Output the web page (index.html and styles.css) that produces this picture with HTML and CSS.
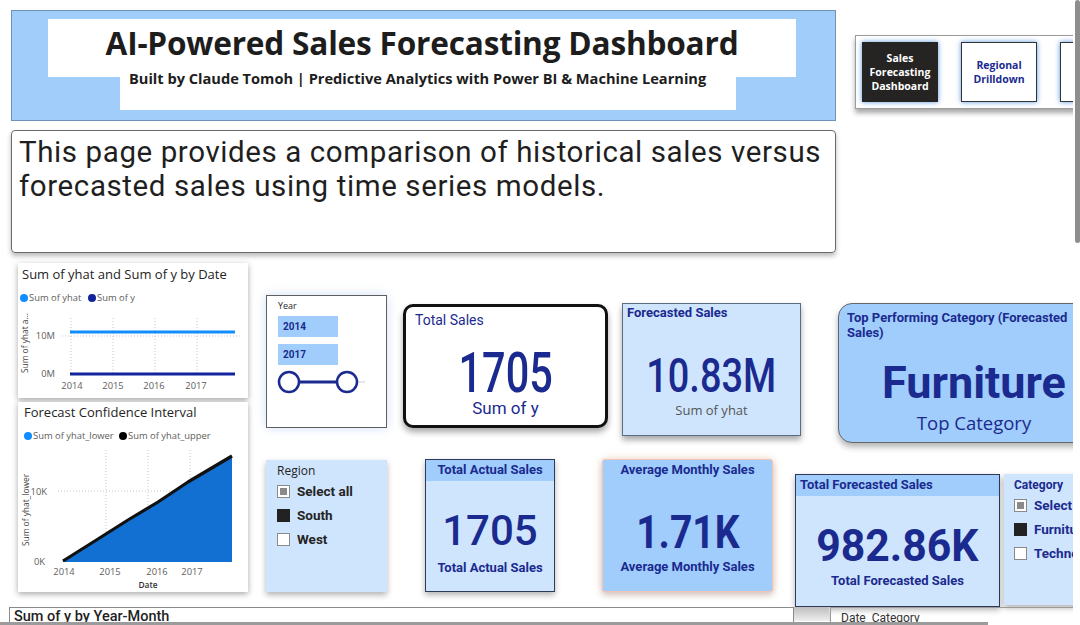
FILE: index.html
```html
<!DOCTYPE html>
<html lang="en">
<head>
<meta charset="utf-8">
<title>AI-Powered Sales Forecasting Dashboard</title>
<link rel="stylesheet" href="styles.css">
</head>
<body>
<div class="page">
  <div class="top">
    <div class="top-left">
      <header class="banner">
        <div class="title-box"><h1>AI-Powered Sales Forecasting Dashboard</h1></div>
        <div class="sub-box"><p>Built by Claude Tomoh | Predictive Analytics with Power BI &amp; Machine Learning</p></div>
      </header>
      <div class="desc">This page provides a comparison of historical sales versus forecasted sales using time series models.</div>
    </div>
    <nav class="nav">
      <div class="nav-btn active">Sales<br>Forecasting<br>Dashboard</div>
      <div class="nav-btn">Regional<br>Drilldown</div>
      <div class="nav-btn"></div>
    </nav>
  </div>

  <div class="middle">
    <div class="charts">
      <div class="chart chart1">
        <svg width="230" height="135" viewBox="0 0 230 135">
          <text x="4" y="16" class="c-title">Sum of yhat and Sum of y by Date</text>
          <circle cx="6" cy="35" r="4" fill="#118DFF"/>
          <text x="11" y="38" class="c-leg">Sum of yhat</text>
          <circle cx="74" cy="35" r="4" fill="#12239E"/>
          <text x="79" y="38" class="c-leg">Sum of y</text>
          <text transform="translate(10 80) rotate(-90)" text-anchor="middle" class="c-axt">Sum of yhat a...</text>
          <line x1="44" y1="73" x2="222" y2="73" class="grid"/>
          <line x1="53" y1="55" x2="53" y2="110" class="grid"/>
          <line x1="95" y1="55" x2="95" y2="110" class="grid"/>
          <line x1="137" y1="55" x2="137" y2="110" class="grid"/>
          <line x1="179" y1="55" x2="179" y2="110" class="grid"/>
          <text x="37" y="76" text-anchor="end" class="c-tick">10M</text>
          <text x="37" y="114" text-anchor="end" class="c-tick">0M</text>
          <line x1="52" y1="69" x2="217" y2="69" stroke="#118DFF" stroke-width="3"/>
          <line x1="52" y1="111" x2="217" y2="111" stroke="#12239E" stroke-width="3"/>
          <text x="54" y="126" text-anchor="middle" class="c-tick">2014</text>
          <text x="95" y="126" text-anchor="middle" class="c-tick">2015</text>
          <text x="136" y="126" text-anchor="middle" class="c-tick">2016</text>
          <text x="178" y="126" text-anchor="middle" class="c-tick">2017</text>
        </svg>
      </div>
      <div class="chart chart2">
        <svg width="230" height="190" viewBox="0 0 230 190">
          <text x="6" y="15" class="c-title">Forecast Confidence Interval</text>
          <circle cx="10" cy="34" r="4" fill="#118DFF"/>
          <text x="15" y="37" class="c-leg">Sum of yhat_lower</text>
          <circle cx="105" cy="34" r="4" fill="#000"/>
          <text x="110" y="37" class="c-leg">Sum of yhat_upper</text>
          <text transform="translate(11 108) rotate(-90)" text-anchor="middle" class="c-axt">Sum of yhat_lower</text>
          <line x1="40" y1="89" x2="214" y2="89" class="grid"/>
          <line x1="88" y1="48" x2="88" y2="158" class="grid"/>
          <line x1="130" y1="48" x2="130" y2="158" class="grid"/>
          <line x1="172" y1="48" x2="172" y2="158" class="grid"/>
          <text x="29" y="93" text-anchor="end" class="c-tick">10K</text>
          <text x="27" y="163" text-anchor="end" class="c-tick">0K</text>
          <polygon points="45,159 214,54 214,160 45,160" fill="#1170D2"/>
          <polyline points="45,159 80,137 110,118 140,100 170,80 214,54" fill="none" stroke="#111" stroke-width="3.2" stroke-linejoin="round"/>
          <text x="46" y="173" text-anchor="middle" class="c-tick">2014</text>
          <text x="92" y="173" text-anchor="middle" class="c-tick">2015</text>
          <text x="139" y="173" text-anchor="middle" class="c-tick">2016</text>
          <text x="174" y="173" text-anchor="middle" class="c-tick">2017</text>
          <text x="130" y="186" text-anchor="middle" class="c-date">Date</text>
        </svg>
      </div>
    </div>

    <div class="tiles">
      <div class="row row1">
        <div class="year-slicer">
          <div class="sl-label">Year</div>
          <div class="year-box">2014</div>
          <div class="year-box">2017</div>
          <svg class="range" width="90" height="26" viewBox="0 0 90 26">
            <line x1="70" y1="13" x2="88" y2="13" stroke="#e6e6e6" stroke-width="2"/>
            <line x1="22" y1="13" x2="62" y2="13" stroke="#1b2a8f" stroke-width="3"/>
            <circle cx="12" cy="13" r="10" fill="#fff" stroke="#1b2a8f" stroke-width="2.5"/>
            <circle cx="70" cy="13" r="10" fill="#fff" stroke="#1b2a8f" stroke-width="2.5"/>
          </svg>
        </div>
        <div class="card total-sales">
          <div class="ts-label">Total Sales</div>
          <div class="ts-value"><span>1705</span></div>
          <div class="ts-sub">Sum of y</div>
        </div>
        <div class="card forecasted">
          <div class="fc-label">Forecasted Sales</div>
          <div class="fc-value"><span>10.83M</span></div>
          <div class="fc-sub">Sum of yhat</div>
        </div>
        <div class="card top-cat">
          <div class="tc-label">Top Performing Category (Forecasted Sales)</div>
          <div class="tc-value">Furniture</div>
          <div class="tc-sub">Top Category</div>
        </div>
      </div>

      <div class="row row2">
        <div class="region-slicer">
          <div class="rs-label">Region</div>
          <div class="opt"><span class="chk partial"></span>Select all</div>
          <div class="opt"><span class="chk on"></span>South</div>
          <div class="opt"><span class="chk"></span>West</div>
        </div>
        <div class="card actual">
          <div class="band">Total Actual Sales</div>
          <div class="big">1705</div>
          <div class="foot">Total Actual Sales</div>
        </div>
        <div class="card avg">
          <div class="band">Average Monthly Sales</div>
          <div class="big bold"><span>1.71K</span></div>
          <div class="foot">Average Monthly Sales</div>
        </div>
        <div class="card tfs">
          <div class="band left">Total Forecasted Sales</div>
          <div class="big bold"><span>982.86K</span></div>
          <div class="foot">Total Forecasted Sales</div>
        </div>
        <div class="cat-slicer">
          <div class="cs-label">Category</div>
          <div class="opt"><span class="chk partial"></span>Select all</div>
          <div class="opt"><span class="chk on"></span>Furniture</div>
          <div class="opt"><span class="chk"></span>Technology</div>
        </div>
      </div>
    </div>
  </div>

  <div class="bottom">
    <div class="ym-box">Sum of y by Year-Month</div>
    <div class="mini-scroll"></div>
    <div class="table-box">Date&nbsp;&nbsp;Category</div>
  </div>
  <div class="bottom-rule"></div>
</div>
<div class="scrollbar"></div>
</body>
</html>
```

FILE: styles.css
```css
* { box-sizing: border-box; margin: 0; padding: 0; }
html, body { width: 1080px; height: 625px; overflow: hidden; background: #fff; }
body { position: relative; font-family: "Open Sans", "Noto Sans", sans-serif; color: #252423; }
.page { width: 1073px; height: 625px; overflow: hidden; position: relative; }

/* top */
.top { display: flex; align-items: flex-start; height: 253px; }
.top-left { margin-left: 11px; width: 825px; flex: none; }
.banner { margin-top: 10px; height: 111px; background: #a0cdfa; border: 1px solid #6f93b8; padding-top: 8px; }
.title-box { margin-left: 36px; width: 748px; height: 58px; background: #fff; text-align: center; padding-top: 5px; }
.title-box h1 { font-size: 31.6px; font-weight: 700; line-height: 38px; color: #1d1d1d; letter-spacing: -0.2px; white-space: nowrap; }
.sub-box { margin-left: 108px; width: 616px; height: 33px; background: #fff; }
.sub-box p { position: relative; top: -9px; margin-left: 9px; font-size: 14.6px; font-weight: 700; line-height: 20px; color: #1d1d1d; white-space: nowrap; }
.desc { margin-top: 9px; height: 123px; border: 1px solid #6b6b6b; border-radius: 4px; box-shadow: 0 3px 5px rgba(0,0,0,0.28); padding: 4px 0 0 7px; font-family: "Roboto", sans-serif; font-size: 29.5px; letter-spacing: 0.6px; line-height: 34px; color: #1f1f1f; }

.nav { margin-left: 19px; margin-top: 35px; width: 240px; height: 74px; flex: none; border: 1px solid #9c9c9c; background: #fff; box-shadow: 0 4px 5px rgba(0,0,0,0.35); display: flex; gap: 23px; padding: 6px 0 0 6px; }
.nav-btn { width: 76px; height: 60px; flex: none; background: #fff; border: 1px solid #333; box-shadow: 0 0 5px rgba(40,120,220,0.8); display: flex; align-items: center; justify-content: center; text-align: center; font-size: 10.5px; font-weight: 700; line-height: 14px; color: #1b2a8f; }
.nav-btn.active { background: #252423; color: #fff; border-color: #252423; }

/* middle */
.middle { display: flex; align-items: flex-start; margin-top: 10px; height: 344px; }
.charts { margin-left: 18px; width: 230px; flex: none; display: flex; flex-direction: column; gap: 4px; }
.chart { background: #fff; box-shadow: 0 2px 6px rgba(0,0,0,0.35); }
.chart svg { display: block; }
.chart1 { height: 135px; }
.chart2 { height: 190px; }
.c-title { font-family: "Open Sans", sans-serif; font-size: 13px; fill: #252423; }
.c-leg { font-family: "Open Sans", sans-serif; font-size: 9.4px; fill: #605e5c; }
.c-axt { font-family: "Open Sans", sans-serif; font-size: 8.4px; fill: #444; }
.c-tick { font-family: "Open Sans", sans-serif; font-size: 9.4px; fill: #605e5c; }
.c-date { font-family: "Open Sans", sans-serif; font-size: 8.4px; font-weight: 600; fill: #333; }
.grid { stroke: #c8c8c8; stroke-width: 1; stroke-dasharray: 1 2; }

.tiles { margin-left: 18px; flex: none; width: 900px; padding-top: 32px; }
.row { display: flex; align-items: flex-start; }
.row1 { height: 164px; }

.year-slicer { width: 121px; height: 133px; flex: none; background: #fff; border: 1px solid #5f5f5f; box-shadow: 0 0 10px rgba(150,190,240,0.45); padding: 4px 0 0 11px; }
.sl-label { font-size: 9px; line-height: 12px; color: #252423; }
.year-box { margin-top: 4px; width: 60px; height: 21px; background: #a0cdfb; color: #1b2a8f; font-family: "Roboto", sans-serif; font-weight: 700; font-size: 10px; line-height: 21px; padding-left: 5px; }
.year-box + .year-box { margin-top: 7px; }
.range { display: block; margin-top: 4px; margin-left: -1px; }

.card { flex: none; }
.total-sales { margin-left: 16px; margin-top: 9px; width: 205px; height: 124px; background: #fff; border: 3px solid #111; border-radius: 10px; box-shadow: 0 4px 6px rgba(0,0,0,0.35); padding: 4px 0 0 9px; font-family: "Roboto", sans-serif; color: #1b2a8f; }
.ts-label { font-size: 14px; line-height: 18px; }
.ts-value { text-align: center; margin-left: -9px; font-size: 56px; font-weight: 500; line-height: 44px; margin-top: 22px; }
.ts-value span { display: inline-block; transform: scaleX(0.74); }
.ts-sub { text-align: center; margin-left: -9px; font-size: 17px; line-height: 20px; margin-top: 3px; }

.forecasted { margin-left: 14px; margin-top: 8px; width: 179px; height: 133px; background: #cfe5fd; border: 1px solid #5d6d80; box-shadow: 0 4px 6px rgba(0,0,0,0.35); padding: 1px 0 0 4px; font-family: "Roboto", sans-serif; color: #1b2a8f; }
.fc-label { font-size: 13px; font-weight: 700; line-height: 16px; }
.fc-value { text-align: center; margin-left: -4px; font-size: 48px; font-weight: 500; line-height: 50px; margin-top: 30px; }
.fc-value span { display: inline-block; transform: scaleX(0.79); }
.fc-sub { text-align: center; margin-left: -4px; font-family: "Open Sans", sans-serif; font-size: 13px; line-height: 18px; color: #555; margin-top: 0; }

.top-cat { margin-left: 37px; margin-top: 8px; width: 272px; height: 140px; background: #a0cdfb; border: 1px solid #666; border-radius: 14px; box-shadow: 0 4px 6px rgba(0,0,0,0.3); padding: 6px 0 0 8px; font-family: "Roboto", sans-serif; color: #1b2a8f; }
.tc-label { width: 236px; font-size: 13px; font-weight: 700; line-height: 15px; }
.tc-value { text-align: center; margin-left: -8px; font-size: 45px; font-weight: 700; line-height: 50px; margin-top: 18px; }
.tc-sub { text-align: center; margin-left: -8px; font-family: "Open Sans", sans-serif; font-size: 18.5px; line-height: 24px; margin-top: 3px; }

.region-slicer { margin-top: 1px; width: 121px; height: 132px; flex: none; background: #cfe5fd; box-shadow: 0 3px 6px rgba(0,0,0,0.3); padding: 3px 0 0 11px; }
.rs-label { font-size: 12px; line-height: 16px; color: #252423; }
.opt { display: flex; align-items: center; height: 24px; font-family: "Roboto", sans-serif; font-weight: 700; font-size: 13.5px; color: #252423; white-space: nowrap; }
.chk { width: 13px; height: 13px; flex: none; border: 1px solid #8a8a8a; background: #fff; margin-right: 7px; position: relative; }
.chk.on { background: #222; border-color: #222; }
.chk.partial::after { content: ""; position: absolute; left: 2px; top: 2px; width: 7px; height: 7px; background: #8a8a8a; }

.actual, .avg, .tfs { font-family: "Roboto", sans-serif; color: #1b2a8f; text-align: center; }
.band { height: 21px; font-size: 13px; font-weight: 700; line-height: 20px; }
.band.left { text-align: left; padding-left: 4px; }
.big { font-size: 42px; font-weight: 500; line-height: 46px; }
.big.bold { font-weight: 700; font-size: 46px; }
.big span { display: inline-block; }
.foot { font-size: 13px; font-weight: 700; line-height: 18px; }

.actual { margin-left: 38px; width: 130px; height: 133px; background: #cfe5fd; border: 1px solid #2d3a5a; box-shadow: 0 3px 6px rgba(0,0,0,0.3); }
.actual .band { background: #a0cdfb; }
.actual .big { margin-top: 27px; }
.actual .foot { margin-top: 5px; }

.avg { margin-left: 47px; width: 171px; height: 133px; background: #a0cdfb; border: 1px solid #f1c4b4; border-radius: 3px; box-shadow: 0 0 8px rgba(240,170,140,0.45), 0 3px 6px rgba(0,0,0,0.2); }
.avg .big { margin-top: 28px; }
.avg .big span { transform: scaleX(0.85); }
.avg .foot { margin-top: 3px; }

.tfs { margin-left: 22px; margin-top: 15px; width: 205px; height: 133px; background: #cfe5fd; border: 1px solid #2d3a5a; box-shadow: 0 3px 6px rgba(0,0,0,0.3); }
.tfs .band { background: #a0cdfb; }
.tfs .big { margin-top: 27px; font-size: 45px; }
.tfs .big span { transform: scaleX(0.95); }
.tfs .foot { margin-top: 3px; }

.cat-slicer { margin-left: 4px; margin-top: 15px; width: 100px; height: 131px; flex: none; background: #cfe5fd; box-shadow: 0 3px 6px rgba(0,0,0,0.3); padding: 3px 0 0 10px; }
.cs-label { font-family: "Roboto", sans-serif; font-weight: 700; font-size: 12px; line-height: 16px; color: #1b2a8f; }
.cat-slicer .opt { color: #1b2a8f; }

/* bottom */
.bottom { display: flex; align-items: flex-start; margin-left: 9px; height: 15px; overflow: hidden; }
.ym-box { width: 785px; height: 30px; flex: none; border: 1px solid #8a8a8a; border-bottom: none; background: #fff; padding: 1px 0 0 4px; font-family: "Roboto", sans-serif; font-weight: 500; font-size: 14.5px; line-height: 16px; color: #1f1f1f; }
.mini-scroll { width: 36px; height: 14px; flex: none; background: linear-gradient(#bdbdbd, #efefef); border-right: 1px solid #ddd; }
.table-box { flex: 1; height: 30px; border-top: 1px solid #9a9a9a; border-left: 1px solid #9a9a9a; padding: 3px 0 0 10px; font-family: "Roboto", sans-serif; font-size: 12px; line-height: 14px; color: #333; }
.bottom-rule { height: 3px; width: 988px; background: #9b9b9b; }

.scrollbar { position: absolute; left: 1075px; top: 0; width: 5px; height: 243px; background: #8e8e8e; border-radius: 3px; }
```
